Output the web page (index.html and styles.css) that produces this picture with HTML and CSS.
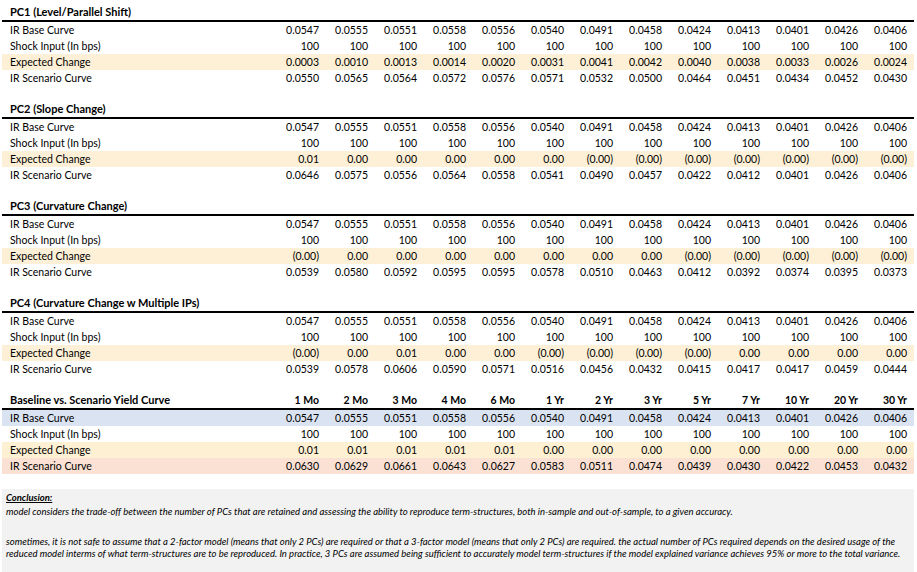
FILE: index.html
```html
<!DOCTYPE html>
<html>
<head>
<meta charset="utf-8">
<link rel="stylesheet" href="styles.css">
</head>
<body>
<div class="sheet">
  <div class="head first"><span class="title">PC1 (Level/Parallel Shift)</span></div>
  <div class="row"><span class="label">IR Base Curve</span><span>0.0547</span><span>0.0555</span><span>0.0551</span><span>0.0558</span><span>0.0556</span><span>0.0540</span><span>0.0491</span><span>0.0458</span><span>0.0424</span><span>0.0413</span><span>0.0401</span><span>0.0426</span><span>0.0406</span></div>
  <div class="row"><span class="label">Shock Input (In bps)</span><span>100</span><span>100</span><span>100</span><span>100</span><span>100</span><span>100</span><span>100</span><span>100</span><span>100</span><span>100</span><span>100</span><span>100</span><span>100</span></div>
  <div class="row exp"><span class="label">Expected Change</span><span>0.0003</span><span>0.0010</span><span>0.0013</span><span>0.0014</span><span>0.0020</span><span>0.0031</span><span>0.0041</span><span>0.0042</span><span>0.0040</span><span>0.0038</span><span>0.0033</span><span>0.0026</span><span>0.0024</span></div>
  <div class="row"><span class="label">IR Scenario Curve</span><span>0.0550</span><span>0.0565</span><span>0.0564</span><span>0.0572</span><span>0.0576</span><span>0.0571</span><span>0.0532</span><span>0.0500</span><span>0.0464</span><span>0.0451</span><span>0.0434</span><span>0.0452</span><span>0.0430</span></div>

  <div class="head"><span class="title">PC2 (Slope Change)</span></div>
  <div class="row"><span class="label">IR Base Curve</span><span>0.0547</span><span>0.0555</span><span>0.0551</span><span>0.0558</span><span>0.0556</span><span>0.0540</span><span>0.0491</span><span>0.0458</span><span>0.0424</span><span>0.0413</span><span>0.0401</span><span>0.0426</span><span>0.0406</span></div>
  <div class="row"><span class="label">Shock Input (In bps)</span><span>100</span><span>100</span><span>100</span><span>100</span><span>100</span><span>100</span><span>100</span><span>100</span><span>100</span><span>100</span><span>100</span><span>100</span><span>100</span></div>
  <div class="row exp"><span class="label">Expected Change</span><span>0.01</span><span>0.00</span><span>0.00</span><span>0.00</span><span>0.00</span><span>0.00</span><span>(0.00)</span><span>(0.00)</span><span>(0.00)</span><span>(0.00)</span><span>(0.00)</span><span>(0.00)</span><span>(0.00)</span></div>
  <div class="row"><span class="label">IR Scenario Curve</span><span>0.0646</span><span>0.0575</span><span>0.0556</span><span>0.0564</span><span>0.0558</span><span>0.0541</span><span>0.0490</span><span>0.0457</span><span>0.0422</span><span>0.0412</span><span>0.0401</span><span>0.0426</span><span>0.0406</span></div>

  <div class="head"><span class="title">PC3 (Curvature Change)</span></div>
  <div class="row"><span class="label">IR Base Curve</span><span>0.0547</span><span>0.0555</span><span>0.0551</span><span>0.0558</span><span>0.0556</span><span>0.0540</span><span>0.0491</span><span>0.0458</span><span>0.0424</span><span>0.0413</span><span>0.0401</span><span>0.0426</span><span>0.0406</span></div>
  <div class="row"><span class="label">Shock Input (In bps)</span><span>100</span><span>100</span><span>100</span><span>100</span><span>100</span><span>100</span><span>100</span><span>100</span><span>100</span><span>100</span><span>100</span><span>100</span><span>100</span></div>
  <div class="row exp"><span class="label">Expected Change</span><span>(0.00)</span><span>0.00</span><span>0.00</span><span>0.00</span><span>0.00</span><span>0.00</span><span>0.00</span><span>0.00</span><span>(0.00)</span><span>(0.00)</span><span>(0.00)</span><span>(0.00)</span><span>(0.00)</span></div>
  <div class="row"><span class="label">IR Scenario Curve</span><span>0.0539</span><span>0.0580</span><span>0.0592</span><span>0.0595</span><span>0.0595</span><span>0.0578</span><span>0.0510</span><span>0.0463</span><span>0.0412</span><span>0.0392</span><span>0.0374</span><span>0.0395</span><span>0.0373</span></div>

  <div class="head"><span class="title">PC4 (Curvature Change w Multiple IPs)</span></div>
  <div class="row"><span class="label">IR Base Curve</span><span>0.0547</span><span>0.0555</span><span>0.0551</span><span>0.0558</span><span>0.0556</span><span>0.0540</span><span>0.0491</span><span>0.0458</span><span>0.0424</span><span>0.0413</span><span>0.0401</span><span>0.0426</span><span>0.0406</span></div>
  <div class="row"><span class="label">Shock Input (In bps)</span><span>100</span><span>100</span><span>100</span><span>100</span><span>100</span><span>100</span><span>100</span><span>100</span><span>100</span><span>100</span><span>100</span><span>100</span><span>100</span></div>
  <div class="row exp"><span class="label">Expected Change</span><span>(0.00)</span><span>0.00</span><span>0.01</span><span>0.00</span><span>0.00</span><span>(0.00)</span><span>(0.00)</span><span>(0.00)</span><span>(0.00)</span><span>0.00</span><span>0.00</span><span>0.00</span><span>0.00</span></div>
  <div class="row"><span class="label">IR Scenario Curve</span><span>0.0539</span><span>0.0578</span><span>0.0606</span><span>0.0590</span><span>0.0571</span><span>0.0516</span><span>0.0456</span><span>0.0432</span><span>0.0415</span><span>0.0417</span><span>0.0417</span><span>0.0459</span><span>0.0444</span></div>

  <div class="head"><span class="title">Baseline vs. Scenario Yield Curve</span><span>1 Mo</span><span>2 Mo</span><span>3 Mo</span><span>4 Mo</span><span>6 Mo</span><span>1 Yr</span><span>2 Yr</span><span>3 Yr</span><span>5 Yr</span><span>7 Yr</span><span>10 Yr</span><span>20 Yr</span><span>30 Yr</span></div>
  <div class="row base"><span class="label">IR Base Curve</span><span>0.0547</span><span>0.0555</span><span>0.0551</span><span>0.0558</span><span>0.0556</span><span>0.0540</span><span>0.0491</span><span>0.0458</span><span>0.0424</span><span>0.0413</span><span>0.0401</span><span>0.0426</span><span>0.0406</span></div>
  <div class="row"><span class="label">Shock Input (In bps)</span><span>100</span><span>100</span><span>100</span><span>100</span><span>100</span><span>100</span><span>100</span><span>100</span><span>100</span><span>100</span><span>100</span><span>100</span><span>100</span></div>
  <div class="row exp2"><span class="label">Expected Change</span><span>0.01</span><span>0.01</span><span>0.01</span><span>0.01</span><span>0.01</span><span>0.00</span><span>0.00</span><span>0.00</span><span>0.00</span><span>0.00</span><span>0.00</span><span>0.00</span><span>0.00</span></div>
  <div class="row scen"><span class="label">IR Scenario Curve</span><span>0.0630</span><span>0.0629</span><span>0.0661</span><span>0.0643</span><span>0.0627</span><span>0.0583</span><span>0.0511</span><span>0.0474</span><span>0.0439</span><span>0.0430</span><span>0.0422</span><span>0.0453</span><span>0.0432</span></div>

  <div class="conclusion">
    <p class="c-title">Conclusion:</p>
    <p class="c-line">model considers the trade-off between the number of PCs that are retained and assessing the ability to reproduce term-structures, both in-sample and out-of-sample, to a given accuracy.</p>
    <p class="c-para">sometimes, it is not safe to assume that a 2-factor model (means that only 2 PCs) are required or that a 3-factor model (means that only 2 PCs) are required. the actual number of PCs required depends on the desired usage of the<br>reduced model interms of what term-structures are to be reproduced. In practice, 3 PCs are assumed being sufficient to accurately model term-structures if the model explained variance achieves 95% or more to the total variance.</p>
  </div>
</div>
</body>
</html>
```

FILE: styles.css
```css
html, body {
  margin: 0;
  padding: 0;
  background: #ffffff;
}

body {
  font-family: Lato, "Liberation Sans", sans-serif;
  font-size: 10.5px;
  color: #000000;
}

.sheet {
  width: 912px;
  margin-left: 2px;
}

.head,
.row {
  display: grid;
  grid-template-columns: 268px repeat(13, 49px);
  padding-right: 7px;
}

.head {
  box-sizing: border-box;
  height: 33px;
  align-items: end;
  border-bottom: 2px solid #000000;
  font-weight: bold;
}

.head.first {
  height: 22px;
}

.head span {
  line-height: 16px;
  text-align: right;
}

.head .title {
  text-align: left;
  padding-left: 8px;
  font-size: 11px;
}

.row {
  height: 16px;
  line-height: 16px;
}

.row span {
  text-align: right;
  white-space: nowrap;
}

.row .label {
  text-align: left;
  padding-left: 8px;
}

.exp {
  background: #fdf0d6;
}

.base {
  background: #dae3f2;
}

.exp2 {
  background: #fef0d2;
}

.scen {
  background: #fbe1d4;
}

.conclusion {
  margin-top: 15px;
  background: #f2f2f2;
  padding: 3px 4px 20px 4px;
  font-style: italic;
  font-size: 9.5px;
}

.conclusion p {
  margin: 0;
}

.c-title {
  font-weight: bold;
  text-decoration: underline;
  line-height: 12px;
  font-size: 9.5px;
}

.c-line {
  margin-top: 2px !important;
  line-height: 12px;
}

.c-para {
  margin-top: 18px !important;
  line-height: 11.5px;
}
```
